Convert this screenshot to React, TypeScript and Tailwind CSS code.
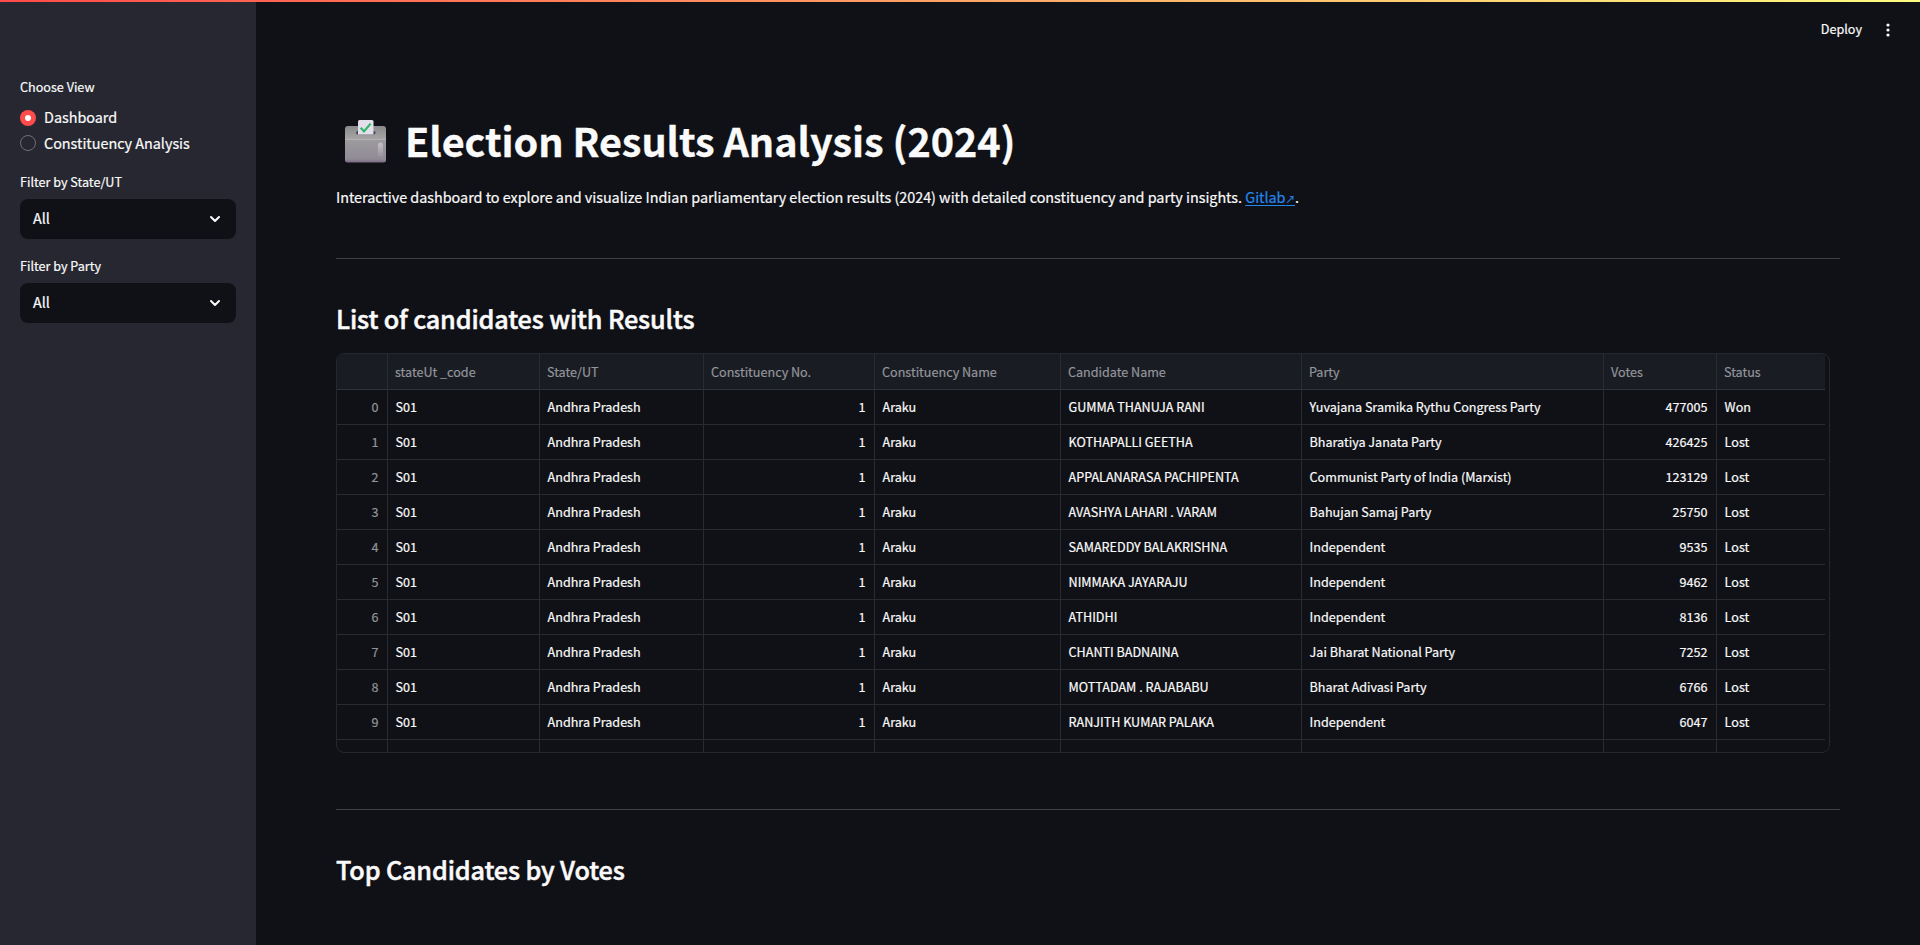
import React from "react";

const FONT = "font-['Noto_Sans_CJK_SC','Noto_Sans',sans-serif]";

const COLS = "grid grid-cols-[51px_152px_164px_171px_186px_241px_302px_113px_108px]";

const HEAD = ["", "stateUt _code", "State/UT", "Constituency No.", "Constituency Name", "Candidate Name", "Party", "Votes", "Status"];

const ROWS: [string, string, string, string][] = [
  ["GUMMA THANUJA RANI", "Yuvajana Sramika Rythu Congress Party", "477005", "Won"],
  ["KOTHAPALLI GEETHA", "Bharatiya Janata Party", "426425", "Lost"],
  ["APPALANARASA PACHIPENTA", "Communist Party of India (Marxist)", "123129", "Lost"],
  ["AVASHYA LAHARI . VARAM", "Bahujan Samaj Party", "25750", "Lost"],
  ["SAMAREDDY BALAKRISHNA", "Independent", "9535", "Lost"],
  ["NIMMAKA JAYARAJU", "Independent", "9462", "Lost"],
  ["ATHIDHI", "Independent", "8136", "Lost"],
  ["CHANTI BADNAINA", "Jai Bharat National Party", "7252", "Lost"],
  ["MOTTADAM . RAJABABU", "Bharat Adivasi Party", "6766", "Lost"],
  ["RANJITH KUMAR PALAKA", "Independent", "6047", "Lost"],
];

function BallotBox() {
  return (
    <svg className="h-[44px] w-[42px]" viewBox="0 0 42 44">
      <defs>
        <linearGradient id="lid" x1="0" y1="0" x2="0" y2="1">
          <stop offset="0" stopColor="#8a8a8a" />
          <stop offset="1" stopColor="#a9a8a9" />
        </linearGradient>
        <linearGradient id="front" x1="0" y1="0" x2="0" y2="1">
          <stop offset="0" stopColor="#9d9b9f" />
          <stop offset="0.85" stopColor="#918b96" />
          <stop offset="1" stopColor="#7a6a82" />
        </linearGradient>
        <linearGradient id="shine" x1="0" y1="0" x2="0" y2="1">
          <stop offset="0" stopColor="#c4c0c8" />
          <stop offset="1" stopColor="#9a949e" />
        </linearGradient>
      </defs>
      <path d="M3 7H38Q41 7 41 10V21H0V10Q0 7 3 7Z" fill="url(#lid)" />
      <path d="M0 20.5H41V41Q41 43.5 38.5 43.5H2.5Q0 43.5 0 41Z" fill="url(#front)" />
      <path d="M0 20.5H41" stroke="#b9b7b9" strokeWidth="0.8" />
      <rect x="11" y="12" width="19.5" height="3.4" rx="1.7" fill="#4d4057" />
      <path d="M14.5 1H27Q28.5 1 28.5 2.5V15.5H13V2.5Q13 1 14.5 1Z" fill="#e2dfea" />
      <path d="M15.7 8.8L19 12.4L25.6 4.6" fill="none" stroke="#2fb56c" strokeWidth="2.2" />
      <rect x="33" y="23.5" width="5" height="14" rx="2.5" fill="url(#shine)" />
    </svg>
  );
}

function Chevron() {
  return (
    <svg className="h-[8px] w-[12px]" viewBox="0 0 12 8" fill="none" stroke="#fafafa" strokeWidth="2" strokeLinecap="round" strokeLinejoin="round">
      <path d="M2 2L6 6L10 2" />
    </svg>
  );
}

function Select({ label }: { label: string }) {
  return (
    <div className="flex flex-col">
      <div className="h-6 text-[12.6px] leading-[21px]">{label}</div>
      <div className="mt-[4px] flex h-10 items-center justify-between rounded-lg bg-[#101116] pl-[13px] pr-[15px]">
        <span className="pb-0.5 text-[14.4px] leading-6">All</span>
        <Chevron />
      </div>
    </div>
  );
}

function Cell({ children, right, dim, last }: { children?: React.ReactNode; right?: boolean; dim?: boolean; last?: boolean }) {
  return (
    <div
      className={`flex h-full items-center pr-[8.5px] text-[12.6px] leading-[18px] tracking-[-0.01px] whitespace-nowrap ${right ? "justify-end" : ""} ${dim ? "pl-[7px] text-[#93959a]" : "pl-[7.6px]"} ${last ? "" : "border-r border-[#2a2b30]"}`}
    >
      {children}
    </div>
  );
}

export default function App() {
  return (
    <div className={`flex h-[945px] w-[1920px] flex-col overflow-hidden bg-[#101116] text-[#fafafa] [-webkit-text-stroke:0.2px] ${FONT}`}>
      <div className="relative z-10 -mb-0.5 h-0.5 shrink-0 bg-[linear-gradient(90deg,#ff4b4b,#fffd80)]" />
      <div className="flex min-h-0 flex-1">
        <aside className="flex w-64 shrink-0 flex-col bg-[#262730] px-5 pt-[76px]">
          <div className="h-6 text-[12.6px] leading-[21px]">Choose View</div>
          <div className="mt-[5px] flex h-[26px] items-center gap-2">
            <span className="flex size-4 items-center justify-center rounded-full bg-[#ff4b4b]">
              <span className="size-1.5 rounded-full bg-white" />
            </span>
            <span className="pb-0.5 text-[14.4px] leading-6 tracking-[-0.02px]">Dashboard</span>
          </div>
          <div className="flex h-[26px] items-center gap-2 pb-[2px]">
            <span className="size-4 rounded-full border border-[#6f7077] bg-[#262730]" />
            <span className="pb-px text-[14.4px] leading-6 tracking-[-0.02px]">Constituency Analysis</span>
          </div>
          <div className="mt-[14px] flex flex-col gap-4">
            <Select label="Filter by State/UT" />
            <Select label="Filter by Party" />
          </div>
        </aside>
        <main className="flex flex-1 flex-col">
          <header className="flex h-[60px] shrink-0 items-center justify-end pr-[30px]">
            <span className="pb-[3px] text-[12.6px] leading-[21px]">Deploy</span>
            <svg className="ml-[24px] h-4 w-1" viewBox="0 0 4 16" fill="#fafafa">
              <circle cx="2" cy="3" r="1.6" />
              <circle cx="2" cy="8" r="1.6" />
              <circle cx="2" cy="13" r="1.6" />
            </svg>
          </header>
          <div className="flex flex-col pl-20 pr-20 pt-[54px]">
            <h1 className="flex h-[53px] items-center pl-[9px] text-[39.6px] leading-[53px] font-bold tracking-[-0.06px]">
              <BallotBox />
              <span className="ml-[18px] pb-[3px] [-webkit-text-stroke:0.3px]">Election Results Analysis (2024)</span>
            </h1>
            <p className="mt-[18px] h-6 text-[14.4px] leading-6 tracking-[-0.027px]">
              Interactive dashboard to explore and visualize Indian parliamentary election results (2024) with detailed constituency and party insights.{" "}
              <a className="text-[#2388ee] underline decoration-1 underline-offset-2">Gitlab<span className="text-[9.6px]">↗</span></a>.
            </p>
            <hr className="mt-[49px] border-[#3e4044]" />
            <h3 className="mt-[41px] h-9 text-[25.2px] leading-9 font-medium tracking-[-0.14px] [-webkit-text-stroke:0.5px]">List of candidates with Results</h3>
            <div className="mt-[17px] h-[400px] w-[1494px] overflow-hidden rounded-lg border border-[#25272d]">
              <div className={`${COLS} h-9 w-[1488px] border-b border-[#31333b] bg-[#1a1c24]`}>
                {HEAD.map((h, i) => (
                  <Cell key={i} dim last={i === 8}><span className="pt-px">{h}</span></Cell>
                ))}
              </div>
              {ROWS.map((r, i) => (
                <div key={i} className={`${COLS} h-[35px] w-[1488px] border-b border-[#2a2b30]`}>
                  <Cell dim right>{i}</Cell>
                  <Cell>S01</Cell>
                  <Cell>Andhra Pradesh</Cell>
                  <Cell right>1</Cell>
                  <Cell>Araku</Cell>
                  <Cell>{r[0]}</Cell>
                  <Cell>{r[1]}</Cell>
                  <Cell right>{r[2]}</Cell>
                  <Cell last>{r[3]}</Cell>
                </div>
              ))}
              <div className={`${COLS} h-3 w-[1488px]`}>
                {HEAD.map((_, i) => (
                  <Cell key={i} last={i === 8} />
                ))}
              </div>
            </div>
            <hr className="mt-[56px] border-[#3e4044]" />
            <h3 className="mt-[41px] h-9 text-[25.2px] leading-9 font-medium tracking-[-0.14px] [-webkit-text-stroke:0.5px]">Top Candidates by Votes</h3>
          </div>
        </main>
      </div>
    </div>
  );
}
